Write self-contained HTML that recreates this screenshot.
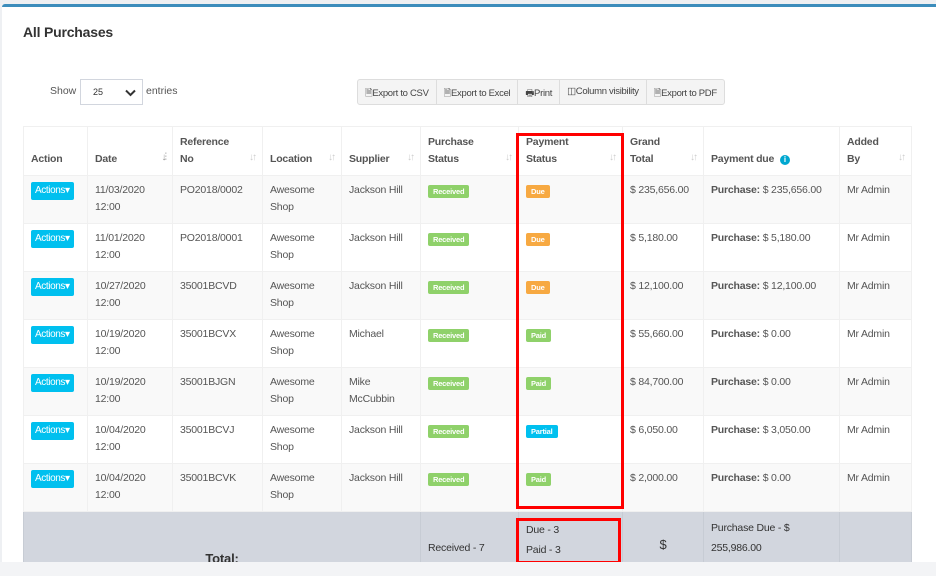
<!DOCTYPE html>
<html><head><style>
*{box-sizing:border-box;margin:0;padding:0}
body{width:936px;height:576px;background:#eef0f3;font-family:"Liberation Sans",sans-serif;font-size:11px;color:#555;position:relative;overflow:hidden}
.card{position:absolute;left:2px;top:4px;width:934px;height:558px;background:#fff;border-top:3px solid #3c8dbc;border-radius:3px 0 0 0}
h3{position:absolute;left:23px;top:24px;font-size:14px;font-weight:bold;color:#333;letter-spacing:-.2px}
.show{position:absolute;left:50px;top:85px;color:#555;font-size:10.5px}
.sel{position:absolute;left:80px;top:79px;width:63px;height:26px;border:1px solid #d2d6de;font-size:9px;padding:7px 0 0 12px;color:#333}
.sel svg{position:absolute;right:6px;top:9px}
.ent{position:absolute;left:146px;top:85px;color:#555;font-size:10.5px}
.btns{position:absolute;left:357px;top:79px;height:26px;display:flex;border:1px solid #ddd;border-radius:3px;background:#f4f4f4}
.btns div{padding:6px 7px 0 7px;font-size:9.5px;color:#444;border-right:1px solid #ddd;letter-spacing:-.3px;white-space:nowrap}
.btns div:last-child{border-right:0}
table{position:absolute;left:23px;top:126px;border-collapse:collapse;table-layout:fixed;width:888px}
td,th{border:1px solid #f0f0f0;vertical-align:top;padding:6px 7px 0 7px;line-height:17px;text-align:left;font-size:10.5px;letter-spacing:-.2px}
th{height:49px;vertical-align:bottom;padding-bottom:7px;font-weight:bold;color:#555;position:relative}
thead tr{height:49px}
th .s{position:absolute;right:7px;bottom:9px;color:#ccc;font-size:10px;font-weight:normal;letter-spacing:-2px}
tbody tr{height:48px}
tbody tr:nth-child(odd){background:#f9f9f9}
.act{display:inline-block;background:#00c0ef;color:#fff;border-radius:2px;font-size:10px;padding:0 4px;line-height:18px;letter-spacing:-.4px;margin-top:-1px}
.lb{display:inline-block;color:#fff;font-weight:bold;font-size:7.5px;padding:0 5px;line-height:13px;border-radius:2px;margin-top:3px}
.g{background:#8fd16a}.o{background:#f7a942}.b{background:#00c0ef}
tfoot tr{background:#d2d6de;height:52px}
tfoot td{border:1px solid #c7ccd4;color:#333}
.red{position:absolute;border:3px solid #f00}
.strip{position:absolute;left:0;top:562px;width:936px;height:14px;background:#f3f4f6}
</style></head><body>
<div class="card"></div>
<h3>All Purchases</h3>
<div class="show">Show</div>
<div class="sel">25<svg width="11" height="8" viewBox="0 0 11 8"><path d="M1 1.5l4.5 4.5 4.5-4.5" stroke="#333" stroke-width="2" fill="none"/></svg></div>
<div class="ent">entries</div>
<div class="btns"><div>&#128462;Export to CSV</div><div>&#128462;Export to Excel</div><div>&#128438;Print</div><div>&#9707;Column visibility</div><div>&#128462;Export to PDF</div></div>
<table>
<colgroup><col style="width:64px"><col style="width:85px"><col style="width:90px"><col style="width:79px"><col style="width:79px"><col style="width:98px"><col style="width:104px"><col style="width:81px"><col style="width:136px"><col style="width:72px"></colgroup>
<thead><tr><th>Action</th><th>Date<span class="s" style="color:#999">↓⫶</span></th><th>Reference<br>No<span class="s">↓↑</span></th><th>Location<span class="s">↓↑</span></th><th>Supplier<span class="s">↓↑</span></th><th>Purchase<br>Status<span class="s">↓↑</span></th><th>Payment<br>Status<span class="s">↓↑</span></th><th>Grand<br>Total<span class="s">↓↑</span></th><th>Payment due <span style="display:inline-block;width:10px;height:10px;border-radius:50%;background:#00a7d0;color:#fff;font-size:8px;text-align:center;line-height:10px;margin-left:3px">i</span></th><th>Added<br>By<span class="s">↓↑</span></th></tr></thead>
<tbody>
<tr><td><span class="act">Actions▾</span></td><td>11/03/2020<br>12:00</td><td>PO2018/0002</td><td>Awesome<br>Shop</td><td>Jackson Hill</td><td><span class="lb g">Received</span></td><td><span class="lb o">Due</span></td><td>$ 235,656.00</td><td><b>Purchase:</b> $ 235,656.00</td><td>Mr Admin</td></tr>
<tr><td><span class="act">Actions▾</span></td><td>11/01/2020<br>12:00</td><td>PO2018/0001</td><td>Awesome<br>Shop</td><td>Jackson Hill</td><td><span class="lb g">Received</span></td><td><span class="lb o">Due</span></td><td>$ 5,180.00</td><td><b>Purchase:</b> $ 5,180.00</td><td>Mr Admin</td></tr>
<tr><td><span class="act">Actions▾</span></td><td>10/27/2020<br>12:00</td><td>35001BCVD</td><td>Awesome<br>Shop</td><td>Jackson Hill</td><td><span class="lb g">Received</span></td><td><span class="lb o">Due</span></td><td>$ 12,100.00</td><td><b>Purchase:</b> $ 12,100.00</td><td>Mr Admin</td></tr>
<tr><td><span class="act">Actions▾</span></td><td>10/19/2020<br>12:00</td><td>35001BCVX</td><td>Awesome<br>Shop</td><td>Michael</td><td><span class="lb g">Received</span></td><td><span class="lb g">Paid</span></td><td>$ 55,660.00</td><td><b>Purchase:</b> $ 0.00</td><td>Mr Admin</td></tr>
<tr><td><span class="act">Actions▾</span></td><td>10/19/2020<br>12:00</td><td>35001BJGN</td><td>Awesome<br>Shop</td><td>Mike<br>McCubbin</td><td><span class="lb g">Received</span></td><td><span class="lb g">Paid</span></td><td>$ 84,700.00</td><td><b>Purchase:</b> $ 0.00</td><td>Mr Admin</td></tr>
<tr><td><span class="act">Actions▾</span></td><td>10/04/2020<br>12:00</td><td>35001BCVJ</td><td>Awesome<br>Shop</td><td>Jackson Hill</td><td><span class="lb g">Received</span></td><td><span class="lb b">Partial</span></td><td>$ 6,050.00</td><td><b>Purchase:</b> $ 3,050.00</td><td>Mr Admin</td></tr>
<tr><td><span class="act">Actions▾</span></td><td>10/04/2020<br>12:00</td><td>35001BCVK</td><td>Awesome<br>Shop</td><td>Jackson Hill</td><td><span class="lb g">Received</span></td><td><span class="lb g">Paid</span></td><td>$ 2,000.00</td><td><b>Purchase:</b> $ 0.00</td><td>Mr Admin</td></tr>
</tbody>
<tfoot><tr><td colspan="5" style="text-align:center;vertical-align:bottom;padding-bottom:0;font-weight:bold;font-size:13px"><div style="margin-top:32px">Total:</div></td><td style="padding-top:28px">Received - 7</td><td style="padding-top:8px;line-height:20px">Due - 3<br>Paid - 3</td><td style="text-align:center;padding-top:24px;font-size:13px">$</td><td style="padding-top:6px;line-height:20px">Purchase Due - $<br>255,986.00</td><td></td></tr></tfoot>
</table>
<div class="red" style="left:516px;top:133px;width:108px;height:376px"></div>
<div class="red" style="left:516px;top:518px;width:105px;height:46px"></div>
<div class="strip"></div>
</body></html>
